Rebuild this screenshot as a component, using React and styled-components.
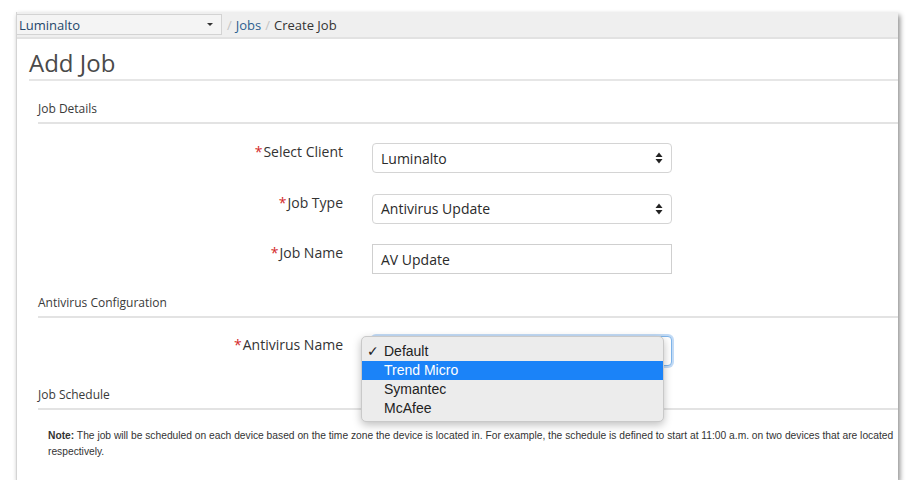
import React from 'react';
import styled, { createGlobalStyle } from 'styled-components';

const GlobalStyle = createGlobalStyle`
  body {
    margin: 0;
    background: #ffffff;
    font-family: "Open Sans", "Noto Sans", sans-serif;
    color: #333;
  }
`;

const Window = styled.div`
  position: relative;
  margin: 12px 0 0 16px;
  width: 882px;
  height: 468px;
  background: #fff;
  border-left: 1px solid #d4d4d4;
  box-sizing: border-box;
  box-shadow: 2px 3px 5px rgba(0, 0, 0, 0.45);
  overflow: hidden;
`;

const TopBar = styled.div`
  display: flex;
  align-items: flex-start;
  height: 27px;
  padding-top: 2px;
  box-sizing: border-box;
  background: #efefef;
  border-bottom: 2px solid #e2e2e2;
`;

const ClientPicker = styled.div`
  display: flex;
  align-items: center;
  justify-content: space-between;
  width: 205px;
  height: 21px;
  padding: 0 8px 0 2px;
  box-sizing: border-box;
  background: #f4f4f4;
  border: 1px solid #d3d3d3;
  border-left: none;
  font-size: 13px;
  color: #24476b;
`;

const Caret = styled.span`
  width: 0;
  height: 0;
  border-left: 3px solid transparent;
  border-right: 3px solid transparent;
  border-top: 3px solid #333;
`;

const Crumbs = styled.div`
  display: flex;
  align-items: center;
  gap: 4px;
  height: 21px;
  margin-left: 5px;
  font-size: 13px;
`;

const Slash = styled.span`
  color: #c4c4c4;
`;

const Crumb = styled.span`
  color: ${(p) => (p.$link ? '#2d5f8f' : '#333')};
`;

const Main = styled.div`
  padding-left: 12px;
`;

const Title = styled.h1`
  margin: 8px 0 0;
  padding-bottom: 0;
  font-size: 24px;
  line-height: 32px;
  font-weight: 400;
  color: #4a4a4a;
  border-bottom: 2px solid #e6e6e6;
`;

const Section = styled.div`
  padding-left: 9px;
`;

const SectionTitle = styled.div`
  margin-top: ${(p) => p.$top}px;
  padding-bottom: 5px;
  font-size: 12px;
  line-height: 16px;
  color: #3a3a3a;
  border-bottom: 2px solid #e3e3e3;
`;

const Form = styled.div`
  display: flex;
  flex-direction: column;
  gap: ${(p) => p.$gap || 20}px;
  margin-top: ${(p) => p.$top}px;
`;

const Row = styled.div`
  display: flex;
  align-items: flex-start;
  gap: 29px;
`;

const Label = styled.div`
  width: 305px;
  text-align: right;
  font-size: 14px;
  line-height: 18px;
  color: #333;
`;

const Req = styled.span`
  color: #d42a2a;
  margin-right: 1px;
`;

const Field = styled.div`
  position: relative;
  display: flex;
  align-items: center;
  justify-content: space-between;
  width: 300px;
  height: 30px;
  padding: 0 8px 0 8px;
  box-sizing: border-box;
  background: #fff;
  border: 1px solid ${(p) => (p.$focus ? '#7fb5ea' : p.$input ? '#cfcfcf' : '#d4d4d4')};
  border-radius: ${(p) => (p.$input ? '0' : '4px')};
  box-shadow: ${(p) =>
    p.$focus ? '0 0 0 2px rgba(120, 175, 235, 0.45)' : 'none'};
  font-size: 14px;
  color: #2a2a2a;
`;

const Arrows = () => (
  <svg width="8" height="12" viewBox="0 0 8 12">
    <path d="M4 0.5 L7.5 5 L0.5 5 Z" fill="#222" />
    <path d="M4 11.5 L7.5 7 L0.5 7 Z" fill="#222" />
  </svg>
);

const Menu = styled.div`
  position: absolute;
  left: -12px;
  top: -1px;
  width: 301px;
  padding: 5px 0 3px;
  background: #ececec;
  border: 1px solid #c9c9c9;
  border-radius: 5px;
  box-shadow: 0 3px 8px rgba(0, 0, 0, 0.25);
  font-family: "Liberation Sans", Arial, sans-serif;
  z-index: 2;
`;

const MenuItem = styled.div`
  position: relative;
  height: 19px;
  line-height: 19px;
  padding-left: 22px;
  font-size: 14px;
  color: ${(p) => (p.$active ? '#fff' : '#222')};
  background: ${(p) => (p.$active ? '#1b83f8' : 'transparent')};
`;

const Check = styled.span`
  position: absolute;
  left: 5px;
  top: 0;
  font-family: "DejaVu Sans", sans-serif;
  font-size: 14px;
  font-weight: 700;
`;

const Note = styled.div`
  margin-top: 18px;
  padding-left: 10px;
  font-family: "Liberation Sans", Arial, sans-serif;
  font-size: 10.25px;
  line-height: 16px;
  color: #333;
  white-space: nowrap;
`;

const options = ['Default', 'Trend Micro', 'Symantec', 'McAfee'];

export default function App() {
  return (
    <>
      <GlobalStyle />
      <Window>
        <TopBar>
          <ClientPicker>
            Luminalto
            <Caret />
          </ClientPicker>
          <Crumbs>
            <Slash>/</Slash>
            <Crumb $link>Jobs</Crumb>
            <Slash>/</Slash>
            <Crumb>Create Job</Crumb>
          </Crumbs>
        </TopBar>
        <Main>
          <Title>Add Job</Title>
          <Section>
            <SectionTitle $top={20}>Job Details</SectionTitle>
            <Form $top={19} $gap={20.5}>
              <Row>
                <Label><Req>*</Req>Select Client</Label>
                <Field>Luminalto<Arrows /></Field>
              </Row>
              <Row>
                <Label><Req>*</Req>Job Type</Label>
                <Field>Antivirus Update<Arrows /></Field>
              </Row>
              <Row>
                <Label><Req>*</Req>Job Name</Label>
                <Field $input>AV Update</Field>
              </Row>
            </Form>
            <SectionTitle $top={21}>Antivirus Configuration</SectionTitle>
            <Form $top={18}>
              <Row>
                <Label><Req>*</Req>Antivirus Name</Label>
                <Field $focus>
                  <span />
                  <Arrows />
                  <Menu>
                    {options.map((o, i) => (
                      <MenuItem key={o} $active={i === 1}>
                        {i === 0 && <Check>✓</Check>}
                        {o}
                      </MenuItem>
                    ))}
                  </Menu>
                </Field>
              </Row>
            </Form>
            <SectionTitle $top={21}>Job Schedule</SectionTitle>
            <Note>
              <b>Note:</b> The job will be scheduled on each device based on the time zone the device is located in. For example, the schedule is defined to start at 11:00 a.m. on two devices that are located
              <br />
              respectively.
            </Note>
          </Section>
        </Main>
      </Window>
    </>
  );
}
